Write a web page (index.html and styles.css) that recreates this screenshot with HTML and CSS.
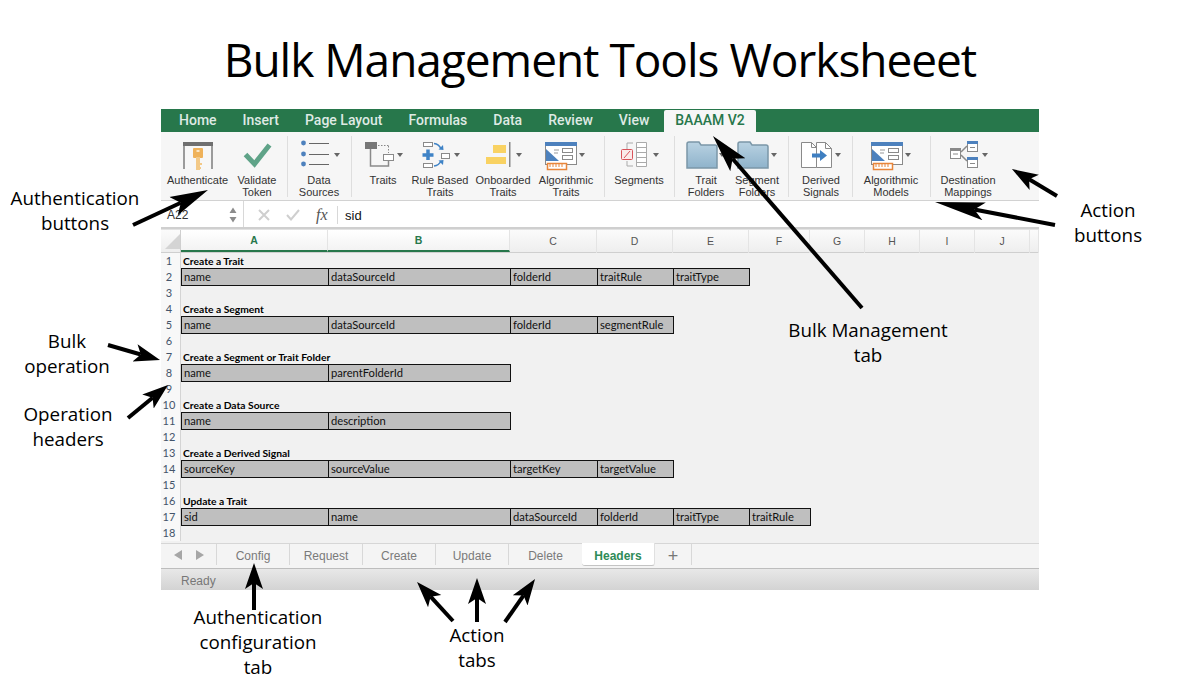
FILE: index.html
```html
<!DOCTYPE html>
<html lang="en">
<head>
  <meta charset="UTF-8">
  <title>Bulk Management Tools Worksheeet</title>
  <link rel="stylesheet" href="styles.css">
</head>
<body>

  <h1 class="title">Bulk Management Tools Worksheeet</h1>

  <div class="window">

    <!-- Menu tabs -->
    <div class="menu">
      <span>Home</span><span>Insert</span><span>Page Layout</span><span>Formulas</span><span>Data</span><span>Review</span><span>View</span>
      <span class="menu-active">BAAAM V2</span>
    </div>

    <!-- Ribbon: every svg uses page coordinates in its viewBox -->
    <div class="ribbon">
      <div class="group g1">
        <div class="item auth">
          <svg width="73" height="34" viewBox="161 138 73 34">
            <path d="M184 169V143H212V169" fill="#f7f7f7" stroke="#7d7d7d" stroke-width="1.5"/>
            <rect x="183" y="142" width="30" height="4" fill="#6f6f6f"/>
            <rect x="193" y="148" width="10" height="10" rx="1" fill="#efb25a"/>
            <rect x="196" y="157" width="4" height="13" fill="#f3c987"/>
            <rect x="199" y="163" width="3" height="2" fill="#f3c987"/>
            <rect x="199" y="167" width="2" height="2" fill="#f3c987"/>
            <rect x="196.500" y="150" width="3" height="2" fill="#fbe6c4"/>
          </svg>
          <div class="label">Authenticate</div>
        </div>
        <div class="item validate">
          <svg width="46" height="34" viewBox="234 138 46 34">
            <path d="M245.500 154.500L254.500 164L269.500 145" fill="none" stroke="#5fa388" stroke-width="5"/>
          </svg>
          <div class="label">Validate<br>Token</div>
        </div>
      </div>

      <div class="group g2">
        <div class="item data">
          <svg width="62" height="34" viewBox="288 138 62 34">
            <circle cx="303.500" cy="143" r="2.400" fill="#4d81bd"/>
            <circle cx="303.500" cy="154" r="2.400" fill="#4d81bd"/>
            <circle cx="303.500" cy="164" r="2.400" fill="#4d81bd"/>
            <path d="M309 143.500H329M309 154.500H329M309 164.500H329" stroke="#666" stroke-width="1"/>
            <path d="M334 153H340L337 157Z" fill="#666"/>
          </svg>
          <div class="label">Data<br>Sources</div>
        </div>
      </div>

      <div class="group g3">
        <div class="item traits">
          <svg width="62" height="34" viewBox="352 138 62 34">
            <rect x="365" y="142" width="12" height="7" fill="#777"/>
            <path d="M378 145.500H389M388.500 146V153" stroke="#888" stroke-dasharray="1.500 1.500" fill="none"/>
            <path d="M370.500 149V166H388.500V161" fill="none" stroke="#8a8a8a" stroke-width="1.500"/>
            <rect x="383.500" y="154.500" width="10" height="6" fill="#fff" stroke="#8a8a8a"/>
            <path d="M397 153H403L400 157Z" fill="#666"/>
          </svg>
          <div class="label">Traits</div>
        </div>
        <div class="item rule">
          <svg width="52" height="34" viewBox="414 138 52 34">
            <rect x="423.500" y="142.500" width="9" height="4" fill="#fff" stroke="#8a8a8a"/>
            <rect x="423.500" y="163.500" width="9" height="4" fill="#fff" stroke="#8a8a8a"/>
            <rect x="441.500" y="153.500" width="8" height="5" fill="#fff" stroke="#8a8a8a"/>
            <path d="M428 149.500V160M422.500 155H433.500" stroke="#3f83c6" stroke-width="3.500"/>
            <path d="M434 143.500Q439 144 441 149M434 166Q439 165.500 441 161" fill="none" stroke="#3f83c6" stroke-width="1.500"/>
            <path d="M438.500 149.500L443.500 150L443 145ZM438.500 160.500L443.500 160L443 165Z" fill="#3f83c6"/>
            <path d="M454 153H460L457 157Z" fill="#666"/>
          </svg>
          <div class="label">Rule Based<br>Traits</div>
        </div>
        <div class="item onboard">
          <svg width="74" height="34" viewBox="466 138 74 34">
            <rect x="493" y="145" width="13" height="8" fill="#f9d262"/>
            <rect x="486" y="157" width="20" height="7" fill="#f9d262"/>
            <rect x="509" y="142" width="1.500" height="25" fill="#888"/>
            <path d="M516 153H522L519 157Z" fill="#666"/>
          </svg>
          <div class="label">Onboarded<br>Traits</div>
        </div>
        <div class="item algo-t">
          <svg width="52" height="34" viewBox="540 138 52 34">
            <use href="#algo" x="545" y="142"/>
            <path d="M579 153H585L582 157Z" fill="#666"/>
          </svg>
          <div class="label">Algorithmic<br>Traits</div>
        </div>
      </div>

      <div class="group g4">
        <div class="item segments">
          <svg width="68" height="34" viewBox="605 138 68 34">
            <path d="M627 149V143H633M627 161V166H633" fill="none" stroke="#aaa"/>
            <path d="M636.500 142.500H646.500V166.500H636.500ZM636.500 147.500H646.500M636.500 152.500H646.500M636.500 157.500H646.500M636.500 162.500H646.500" fill="#fff" stroke="#aaa"/>
            <rect x="621.500" y="149.500" width="11" height="10" rx="1" fill="#fbeaea" stroke="#d9535a"/>
            <path d="M624 158L630 151" stroke="#d9535a"/>
            <path d="M653 153H659L656 157Z" fill="#666"/>
          </svg>
          <div class="label">Segments</div>
        </div>
      </div>

      <div class="group g5">
        <div class="item tfolder">
          <svg width="62" height="34" viewBox="675 138 62 34">
            <use href="#folder" x="686" y="141"/>
            <path d="M719 153H725L722 157Z" fill="#666"/>
          </svg>
          <div class="label">Trait<br>Folders</div>
        </div>
        <div class="item sfolder">
          <svg width="40" height="34" viewBox="737 138 40 34">
            <use href="#folder" x="737" y="141"/>
            <path d="M771 153H777L774 157Z" fill="#666"/>
          </svg>
          <div class="label">Segment<br>Folders</div>
        </div>
      </div>

      <div class="group g6">
        <div class="item derived">
          <svg width="64" height="34" viewBox="789 138 64 34">
            <path d="M801.500 142.500H811.500L816.500 147.500V167.500H801.500Z" fill="#fff" stroke="#8a8a8a"/>
            <path d="M816.500 142.500H825.500L831.500 148.500V167.500H816.500Z" fill="#fff" stroke="#8a8a8a"/>
            <path d="M811.500 142.500V147.500H816.500M825.500 142.500V148.500H831.500" fill="none" stroke="#8a8a8a"/>
            <path d="M812 153.500H820V150L827 155.500L820 161V157.500H812Z" fill="#3f7fc1"/>
            <path d="M835 153H841L838 157Z" fill="#666"/>
          </svg>
          <div class="label">Derived<br>Signals</div>
        </div>
      </div>

      <div class="group g7">
        <div class="item algo-m">
          <svg width="76" height="34" viewBox="853 138 76 34">
            <use href="#algo" x="871" y="142"/>
            <path d="M905 153H911L908 157Z" fill="#666"/>
          </svg>
          <div class="label">Algorithmic<br>Models</div>
        </div>
      </div>

      <div class="group g8">
        <div class="item dest">
          <svg width="74" height="34" viewBox="931 138 74 34">
            <rect x="950.500" y="148.500" width="10" height="10" fill="#fff" stroke="#8a8a8a"/>
            <rect x="950" y="148" width="11" height="3" fill="#8a8a8a"/>
            <path d="M953 154H958" stroke="#8a8a8a"/>
            <path d="M961 152L967 146M961 155L967 161" stroke="#8a8a8a" stroke-width="1.500"/>
            <rect x="967.500" y="141.500" width="10" height="10" fill="#fff" stroke="#8a8a8a"/>
            <rect x="967" y="141" width="11" height="3" fill="#4d81bd"/>
            <path d="M970 147.500H975" stroke="#8a8a8a"/>
            <rect x="967.500" y="157.500" width="10" height="10" fill="#fff" stroke="#8a8a8a"/>
            <rect x="967" y="157" width="11" height="3" fill="#4d81bd"/>
            <path d="M970 163.500H975" stroke="#8a8a8a"/>
            <path d="M982 153H988L985 157Z" fill="#666"/>
          </svg>
          <div class="label">Destination<br>Mappings</div>
        </div>
      </div>
    </div>

    <!-- Formula bar -->
    <div class="formula">
      <div class="namebox">
        <span>A22</span>
        <svg width="8" height="16" viewBox="0 0 8 16"><path d="M0.500 6L4 0.500L7.500 6ZM0.500 10L4 15.500L7.500 10Z" fill="#8c8c8c"/></svg>
      </div>
      <svg class="fx-icon" width="12" height="12" viewBox="0 0 12 12"><path d="M1 1L11 11M11 1L1 11" stroke="#cfcfcf" stroke-width="2"/></svg>
      <svg class="fx-icon" width="14" height="12" viewBox="0 0 14 12"><path d="M1 6L5 10.500L13 1" fill="none" stroke="#cfcfcf" stroke-width="2"/></svg>
      <span class="fx">fx</span>
      <span class="fvalue">sid</span>
    </div>

    <!-- Column letters -->
    <div class="cols">
      <div class="corner"><svg width="16" height="16" viewBox="0 0 16 16"><path d="M16 1V16H1Z" fill="#d4d4d4"/></svg></div>
      <div class="col col-sel">A</div>
      <div class="col col-sel">B</div>
      <div class="col">C</div>
      <div class="col">D</div>
      <div class="col">E</div>
      <div class="col">F</div>
      <div class="col">G</div>
      <div class="col">H</div>
      <div class="col">I</div>
      <div class="col">J</div>
      <div class="col"></div>
    </div>

    <!-- Sheet -->
    <div class="sheet">
      <div class="row"><div class="num">1</div><div class="head">Create a Trait</div></div>
      <div class="row"><div class="num">2</div><div class="cell">name</div><div class="cell">dataSourceId</div><div class="cell">folderId</div><div class="cell">traitRule</div><div class="cell">traitType</div></div>
      <div class="row"><div class="num">3</div></div>
      <div class="row"><div class="num">4</div><div class="head">Create a Segment</div></div>
      <div class="row"><div class="num">5</div><div class="cell">name</div><div class="cell">dataSourceId</div><div class="cell">folderId</div><div class="cell">segmentRule</div></div>
      <div class="row"><div class="num">6</div></div>
      <div class="row"><div class="num">7</div><div class="head">Create a Segment or Trait Folder</div></div>
      <div class="row"><div class="num">8</div><div class="cell">name</div><div class="cell">parentFolderId</div></div>
      <div class="row"><div class="num">9</div></div>
      <div class="row"><div class="num">10</div><div class="head">Create a Data Source</div></div>
      <div class="row"><div class="num">11</div><div class="cell">name</div><div class="cell">description</div></div>
      <div class="row"><div class="num">12</div></div>
      <div class="row"><div class="num">13</div><div class="head">Create a Derived Signal</div></div>
      <div class="row"><div class="num">14</div><div class="cell">sourceKey</div><div class="cell">sourceValue</div><div class="cell">targetKey</div><div class="cell">targetValue</div></div>
      <div class="row"><div class="num">15</div></div>
      <div class="row"><div class="num">16</div><div class="head">Update a Trait</div></div>
      <div class="row"><div class="num">17</div><div class="cell">sid</div><div class="cell">name</div><div class="cell">dataSourceId</div><div class="cell">folderId</div><div class="cell">traitType</div><div class="cell">traitRule</div></div>
      <div class="row"><div class="num">18</div></div>
    </div>

    <!-- Sheet tabs -->
    <div class="tabs">
      <div class="tab-nav">
        <svg width="32" height="12" viewBox="0 0 32 12"><path d="M9 1V11L1 6ZM23 1V11L31 6Z" fill="#a6a6a6"/></svg>
      </div>
      <div class="tab">Config</div>
      <div class="tab">Request</div>
      <div class="tab">Create</div>
      <div class="tab">Update</div>
      <div class="tab tab-last">Delete</div>
      <div class="tab-active">Headers</div>
      <div class="tab-add">+</div>
    </div>

    <div class="status">Ready</div>
  </div>

  <!-- Shared icon parts -->
  <svg class="defs" width="0" height="0">
    <defs>
      <linearGradient id="fold" x1="0" y1="0" x2="0" y2="1">
        <stop offset="0" stop-color="#b9d2e2"/>
        <stop offset="1" stop-color="#8fb3cb"/>
      </linearGradient>
      <g id="folder">
        <path d="M1 27V3Q1 1 3 1H13L15 4H29Q31 4 31 6V27Z" fill="url(#fold)" stroke="#7b97a8" stroke-width="1.500"/>
      </g>
      <g id="algo">
        <rect x="0.500" y="0.500" width="31" height="22" fill="#fff" stroke="#8a8a8a"/>
        <rect x="0" y="0" width="32" height="4" fill="#4d81bd"/>
        <path d="M1 7L14 19H1Z" fill="#4d81bd"/>
        <path d="M9 8H14M9 11H13" stroke="#999"/>
        <rect x="17.500" y="6.500" width="10" height="4" fill="#fff" stroke="#8a8a8a"/>
        <rect x="17.500" y="13.500" width="10" height="4" fill="#fff" stroke="#8a8a8a"/>
        <rect x="2.500" y="21.500" width="19" height="6" fill="#fff" stroke="#e8853a" stroke-width="1.500"/>
        <path d="M5 22V25M8 22V25M11 22V25M14 22V25M17 22V25" stroke="#e8853a"/>
      </g>
      <marker id="head" markerUnits="userSpaceOnUse" markerWidth="32" markerHeight="24" refX="6" refY="12" orient="auto">
        <path d="M0 3L26 12L0 21L6 12Z" fill="#000"/>
      </marker>
      <marker id="big" markerUnits="userSpaceOnUse" markerWidth="44" markerHeight="24" refX="8" refY="12" orient="auto">
        <path d="M0 2L38 12L0 22L8 12Z" fill="#000"/>
      </marker>
      <marker id="long" markerUnits="userSpaceOnUse" markerWidth="56" markerHeight="24" refX="10" refY="12" orient="auto">
        <path d="M0 3L50 12L0 21L10 12Z" fill="#000"/>
      </marker>
    </defs>
  </svg>

  <!-- Callouts over the screenshot -->
  <svg class="arrows" width="1200" height="700" viewBox="0 0 1200 700">
    <g stroke="#000" stroke-width="4">
      <line x1="133" y1="225" x2="180.800" y2="202.700" marker-end="url(#big)"/>
      <line x1="862" y1="308" x2="732.600" y2="158.700" marker-end="url(#big)"/>
      <line x1="1057" y1="196" x2="1029.100" y2="179.300" marker-end="url(#head)"/>
      <line x1="1055" y1="225" x2="974.300" y2="209.500" marker-end="url(#long)"/>
      <line x1="108" y1="345" x2="140.800" y2="354.500" marker-end="url(#head)"/>
      <line x1="128" y1="418" x2="152.600" y2="397.700" marker-end="url(#head)"/>
      <line x1="254" y1="610" x2="254" y2="583" marker-end="url(#head)"/>
      <line x1="453" y1="621" x2="430.600" y2="596.700" marker-end="url(#head)"/>
      <line x1="477" y1="622" x2="477" y2="598" marker-end="url(#head)"/>
      <line x1="505" y1="622" x2="523.600" y2="595.400" marker-end="url(#head)"/>
    </g>
  </svg>

  <div class="note note-auth">Authentication<br>buttons</div>
  <div class="note note-action">Action<br>buttons</div>
  <div class="note note-tab">Bulk Management<br>tab</div>
  <div class="note note-bulk">Bulk<br>operation</div>
  <div class="note note-headers">Operation<br>headers</div>
  <div class="note note-config">Authentication<br>configuration<br>tab</div>
  <div class="note note-tabs">Action<br>tabs</div>

</body>
</html>
```

FILE: styles.css
```css
body {
  position: relative;
  margin: 0;
  height: 700px;
  overflow: hidden;
  background-color: #fff;
  font-family: "Liberation Sans", Arial, sans-serif;
}
.title {
  margin: 0;
  height: 109px;
  line-height: 119px;
  text-align: center;
  font-family: "Open Sans", sans-serif;
  font-size: 46px;
  font-weight: 400;
  letter-spacing: -1.030px;
  color: #000;
}
.window {
  width: 878px;
  margin-left: 161px;
}

/* Menu tabs */
.menu {
  display: flex;
  gap: 26px;
  height: 23px;
  padding-left: 18px;
  background-color: #27774b;
  color: #dfeae4;
  font-family: Roboto, sans-serif;
  font-size: 14px;
  font-weight: 500;
  line-height: 23px;
}
.menu-active {
  margin: 1px 0 0 -11px;
  padding: 0 11px;
  line-height: 21px;
  background-color: #f6f6f6;
  color: #27774b;
  border-radius: 2px 2px 0 0;
}

/* Ribbon */
.ribbon {
  display: flex;
  height: 69px;
  box-sizing: border-box;
  background-color: #f6f6f6;
  border-bottom: 1px solid #d2d2d2;
}
.group {
  display: flex;
  box-sizing: border-box;
  height: 61px;
  margin-top: 4px;
  border-right: 1px solid #dedede;
}
.g1 { width: 127px; }
.g2 { width: 64px; }
.g3 { width: 253px; }
.g4 { width: 70px; }
.g5 { width: 114px; }
.g6 { width: 64px; }
.g7 { width: 78px; }
.g8 { width: 108px; border-right: 0; }
.item {
  flex: none;
  display: flex;
  flex-direction: column;
  align-items: center;
}
.item svg {
  margin-top: 2px;
  flex: none;
}
.auth { width: 73px; }
.validate { width: 46px; }
.data { width: 62px; }
.traits { width: 62px; }
.rule { width: 52px; }
.onboard { width: 74px; }
.algo-t { width: 52px; }
.segments { width: 68px; }
.tfolder { width: 62px; }
.sfolder { width: 40px; }
.derived { width: 64px; }
.algo-m { width: 76px; }
.dest { width: 74px; }
.label {
  margin-top: 2px;
  font-size: 11px;
  line-height: 12px;
  color: #333;
  text-align: center;
  white-space: nowrap;
}

/* Formula bar */
.formula {
  display: flex;
  align-items: center;
  height: 28px;
  box-sizing: border-box;
  background-color: #fff;
  border-bottom: 2px solid #cfcfcf;
}
.namebox {
  display: flex;
  align-items: center;
  justify-content: space-between;
  box-sizing: border-box;
  width: 83px;
  height: 100%;
  padding: 2px 6px 0 6px;
  border-right: 1px solid #d8d8d8;
  font-size: 12px;
  color: #333;
}
.fx-icon {
  margin-left: 14px;
  margin-top: 2px;
}
.fx-icon + .fx-icon {
  margin-left: 16px;
}
.fx {
  width: 21px;
  margin: 2px 0 0 16px;
  height: 18px;
  border-right: 1px solid #d8d8d8;
  font-family: "Liberation Serif", serif;
  font-style: italic;
  font-size: 16px;
  line-height: 17px;
  color: #555;
}
.fvalue {
  margin: 2px 0 0 7px;
  font-size: 13px;
  color: #111;
}

/* Sheet grid */
.cols, .row {
  display: grid;
  grid-template-columns: 20px 147px 182px 87px 76px 76px 61px 55px 55px 55px 55px 9px;
}
.cols {
  height: 24px;
  box-sizing: border-box;
  border-top: 1px solid #e2e2e2;
  border-bottom: 1px solid #cfcfcf;
  background: linear-gradient(#fbfbfb, #eeeeee);
}
.corner {
  padding: 3px 0 0 3px;
  border-right: 1px solid #cfcfcf;
}
.col {
  border-right: 1px solid #e4e4e4;
  text-align: center;
  font-size: 10.500px;
  font-weight: 400;
  line-height: 22px;
  color: #555;
}
.col-sel {
  height: 22px;
  box-sizing: border-box;
  border-bottom: 2px solid #27774b;
  background: linear-gradient(#ffffff, #f3f3f3);
  color: #27774b;
  font-weight: 700;
  line-height: 21px;
}
.sheet {
  height: 290px;
  background-color: #f1f1f1;
  font-family: Lato, sans-serif;
}
.row {
  height: 16px;
}
.num {
  box-sizing: border-box;
  background-color: #f8f8f8;
  border-right: 1px solid #d4d4d4;
  padding-right: 3px;
  text-align: center;
  font-size: 11px;
  line-height: 16px;
  color: #44546a;
}
.head {
  grid-column: 2 / 6;
  padding-left: 2px;
  font-size: 10.300px;
  font-weight: 700;
  line-height: 17px;
  color: #000;
}
.cell {
  margin: -1px -1px 0 0;
  padding-left: 2px;
  border: 1px solid #111;
  background-color: #bfbfbf;
  font-size: 11.200px;
  line-height: 16px;
  color: #111;
}

/* Sheet tabs */
.tabs {
  display: flex;
  align-items: flex-start;
  height: 26px;
  box-sizing: border-box;
  border-top: 1px solid #d6d6d6;
  border-bottom: 1px solid #bdbdbd;
  background-color: #f4f4f4;
  font-size: 12px;
  color: #7a7a7a;
}
.tab-nav {
  display: flex;
  align-items: center;
  justify-content: center;
  width: 55px;
  height: 21px;
  border-right: 1px solid #d8d8d8;
}
.tab {
  width: 72px;
  height: 21px;
  border-right: 1px solid #d8d8d8;
  text-align: center;
  line-height: 25px;
}
.tab-last {
  border-right: 0;
  width: 73px;
}
.tab-active {
  width: 72px;
  height: 22px;
  margin-top: -1px;
  background-color: #fff;
  border-bottom: 1px solid #c4c4c4;
  border-right: 1px solid #e0e0e0;
  border-radius: 0 0 3px 3px;
  text-align: center;
  line-height: 26px;
  font-weight: 700;
  color: #2e8b57;
}
.tab-add {
  width: 36px;
  height: 21px;
  border-right: 1px solid #d8d8d8;
  text-align: center;
  font-size: 18px;
  line-height: 24px;
  color: #777;
}
.status {
  height: 21px;
  padding-left: 20px;
  background: linear-gradient(#e8e8e8, #d3d3d3);
  font-size: 12px;
  line-height: 25px;
  color: #777;
}

/* Callouts */
.defs {
  position: absolute;
}
.arrows {
  position: absolute;
  top: 0;
  left: 0;
  pointer-events: none;
}
.note {
  position: absolute;
  text-align: center;
  white-space: nowrap;
  transform: translateX(-50%);
  font-family: "Open Sans", sans-serif;
  font-size: 18.800px;
  line-height: 25px;
  color: #000;
}
.note-auth { left: 75px; top: 186px; }
.note-action { left: 1108px; top: 198px; }
.note-tab { left: 868px; top: 318px; }
.note-bulk { left: 67px; top: 329px; }
.note-headers { left: 68px; top: 402px; }
.note-config { left: 258px; top: 605px; }
.note-tabs { left: 477px; top: 623px; }
```
